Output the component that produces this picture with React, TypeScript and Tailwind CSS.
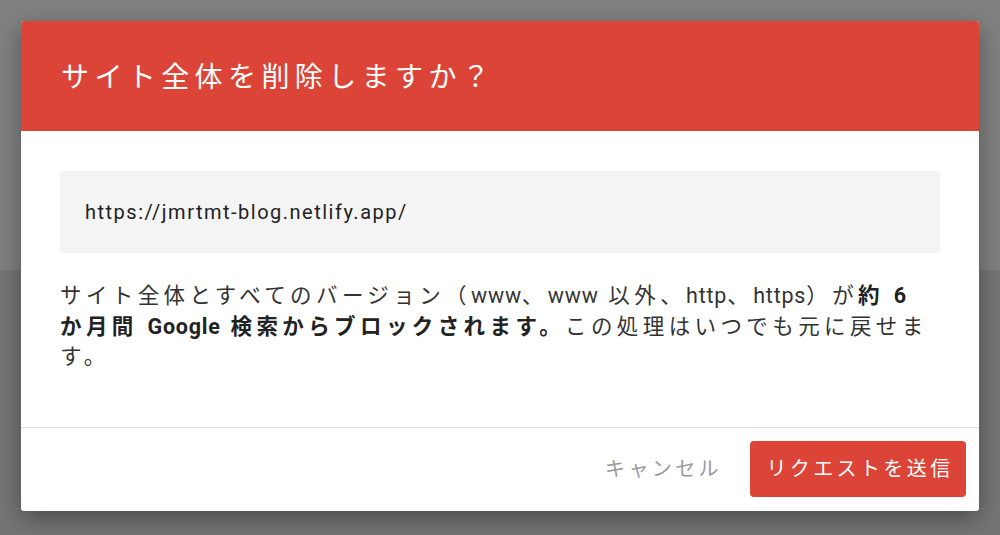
import React, { ReactElement } from 'react'

function Latin({ children, bold }: { children: React.ReactNode; bold?: boolean }): ReactElement {
  return (
    <span className={`tracking-[0.8px] ${bold ? 'font-bold' : ''}`}>{children}</span>
  )
}

function DeleteDialog(): ReactElement {
  return (
    <div className="w-[958px] rounded-[3px] bg-white shadow-[0_8px_24px_rgba(0,0,0,0.35)] overflow-hidden">
      <div className="h-[110px] bg-[#db4437] flex items-center px-10 pt-1">
        <h1 className="text-white text-[28px] tracking-[5.4px] font-normal leading-none">
          サイト全体を削除しますか？
        </h1>
      </div>
      <div className="px-[39px] pt-10 pb-[54px]">
        <div className="h-[82px] rounded bg-[#f4f4f4] flex items-center px-[25px] text-[20px] tracking-[1.5px] text-[#222]">
          https://jmrtmt-blog.netlify.app/
        </div>
        <p className="mt-7 pr-1 text-[21.5px] leading-[30.5px] text-[#333] tracking-[4.4px]">
          サイト全体とすべてのバージョン（<Latin>www</Latin>、<Latin>www</Latin> 以外、
          <Latin>http</Latin>、<Latin>https</Latin>）が
          <b className="font-bold text-[#222]">
            約 <Latin>6</Latin> か月間 <Latin>Google</Latin> 検索からブロックされます。
          </b>
          この処理はいつでも元に戻せます。
        </p>
      </div>
      <div className="border-t border-[#e0e0e0] h-[84px] flex items-center justify-end gap-7 pr-[13px]">
        <button className="text-[20px] tracking-[3.4px] text-[#9a9a9a] px-0">キャンセル</button>
        <button className="h-[56px] w-[216px] rounded bg-[#db4437] text-white text-[20px] tracking-[3.4px] pl-1">
          リクエストを送信
        </button>
      </div>
    </div>
  )
}

export default function App(): ReactElement {
  return (
    <div
      className="w-[1000px] h-[535px] bg-[linear-gradient(#808080_0_270px,#757575_270px)] pl-[21px] pt-[21px] overflow-hidden"
      style={{ fontFamily: '"Roboto", "Noto Sans CJK JP", sans-serif' }}
    >
      <DeleteDialog />
    </div>
  )
}
